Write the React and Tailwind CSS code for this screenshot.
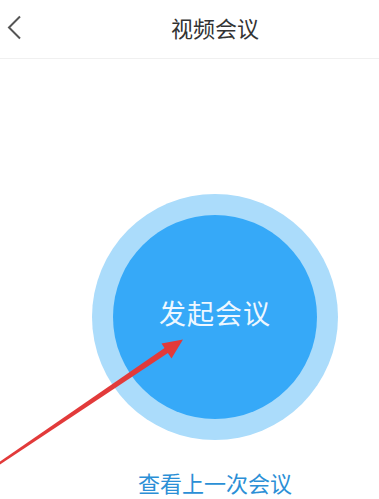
export default function App() {
  const font = { fontFamily: '"Noto Sans CJK SC", "Noto Sans", sans-serif' };
  return (
    <div className="relative w-[379px] h-[499px] overflow-hidden bg-white" style={font}>
      <div className="relative h-[59px] border-b border-[#f0f0f0] flex items-center">
        <svg className="absolute left-[6px] top-[15px]" width="16" height="25" viewBox="0 0 16 25">
          <polyline points="14,1.5 3,12.5 14,23.5" fill="none" stroke="#555555" strokeWidth="2" />
        </svg>
        <div className="pl-[51px] w-full flex justify-center">
          <span className="text-[22px] leading-[28px] text-[#333333] -mt-[4px]">视频会议</span>
        </div>
      </div>
      <div className="pl-[51px] flex flex-col items-center">
        <div className="mt-[135px] w-[246px] h-[246px] rounded-full bg-[#abdcfb] flex items-center justify-center">
          <div className="w-[204px] h-[204px] rounded-full bg-[#36a9f8] flex items-center justify-center">
            <span className="text-[27px] leading-[32px] text-[#eef7ff] -mt-[8px] tracking-[1px]">发起会议</span>
          </div>
        </div>
        <div className="mt-[29px] text-[22px] leading-[26px] text-[#2b8fd6]">查看上一次会议</div>
      </div>
      <svg className="absolute left-0 top-0 pointer-events-none" width="379" height="499" viewBox="0 0 379 499">
        <polygon points="-4.3,467.4 -5.7,465.4 165.3,347.5 168.7,352.5" fill="#e23a3a" />
        <polygon points="183,339.5 161.5,343.5 171.5,358.5" fill="#e23a3a" />
      </svg>
    </div>
  );
}
